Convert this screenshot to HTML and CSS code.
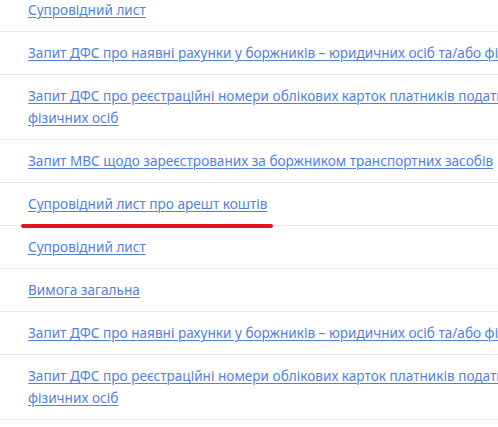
FILE: index.html
```html
<!DOCTYPE html>
<html lang="uk">
<head>
<meta charset="utf-8">
<title>Документи</title>
<link rel="stylesheet" href="styles.css">
</head>
<body>
<div class="page">
  <ul class="docs">
    <li class="row"><a href="#">Супровідний лист</a></li>
    <li class="row"><a href="#">Запит ДФС про наявні рахунки у боржників – юридичних осіб та/або фізичних осіб</a></li>
    <li class="row"><a href="#">Запит ДФС про реєстраційні номери облікових карток платників податків – фізичних осіб</a></li>
    <li class="row"><a href="#">Запит МВС щодо зареєстрованих за боржником транспортних засобів</a></li>
    <li class="row marked"><a href="#">Супровідний лист про арешт коштів</a><span class="mark"></span></li>
    <li class="row"><a href="#">Супровідний лист</a></li>
    <li class="row"><a href="#">Вимога загальна</a></li>
    <li class="row"><a href="#">Запит ДФС про наявні рахунки у боржників – юридичних осіб та/або фізичних осіб</a></li>
    <li class="row"><a href="#">Запит ДФС про реєстраційні номери облікових карток платників податків – фізичних осіб</a></li>
  </ul>
</div>
</body>
</html>
```

FILE: styles.css
```css
html, body {
  margin: 0;
  padding: 0;
  background: #ffffff;
  overflow: hidden;
}
.page {
  width: 610px;
  margin-top: -11px;
}
.docs {
  list-style: none;
  margin: 0;
  padding: 0;
}
.row {
  position: relative;
  padding: 10px 30px 10px 28px;
  border-bottom: 1px solid #ebebeb;
  font-family: "Noto Sans", sans-serif;
  font-size: 13.6px;
  line-height: 22px;
}
.row a {
  color: #5283da;
  text-decoration: underline;
  text-underline-offset: 2px;
  text-decoration-thickness: 1px;
}
.mark {
  position: absolute;
  left: 21px;
  width: 252px;
  bottom: -3px;
  height: 4px;
  border-radius: 2px;
  background: #e0141c;
}
```
